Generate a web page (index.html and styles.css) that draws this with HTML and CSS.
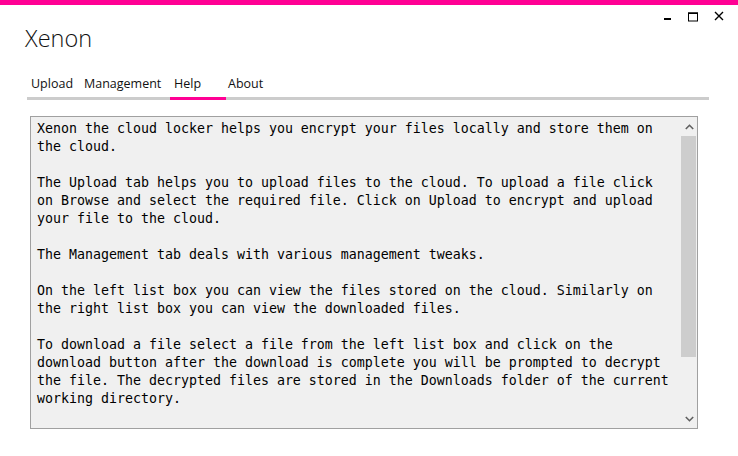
FILE: index.html
```html
<!DOCTYPE html>
<html>
<head>
<meta charset="utf-8">
<link rel="stylesheet" href="styles.css">
</head>
<body>
<div class="topbar"></div>
<div class="header">
  <div class="title">Xenon</div>
  <div class="controls">
    <svg class="ctl ctl-min" width="10" height="10" viewBox="0 0 10 10"><rect x="0" y="7" width="7" height="2" fill="#000"/></svg>
    <svg class="ctl ctl-max" width="11" height="10" viewBox="0 0 11 10"><rect x="0.5" y="1" width="9" height="8" fill="none" stroke="#000" stroke-width="1"/><rect x="0" y="0.5" width="10" height="1.5" fill="#000"/></svg>
    <svg class="ctl ctl-close" width="10" height="10" viewBox="0 0 10 10"><path d="M1 1 L9 9 M9 1 L1 9" stroke="#000" stroke-width="1.4" fill="none"/></svg>
  </div>
</div>
<div class="tabs">
  <div class="tab tab-upload">Upload</div>
  <div class="tab tab-manage">Management</div>
  <div class="tab tab-help active">Help</div>
  <div class="tab tab-about">About</div>
</div>
<div class="box">
  <div class="text">Xenon the cloud locker helps you encrypt your files locally and store them on
the cloud.

The Upload tab helps you to upload files to the cloud. To upload a file click
on Browse and select the required file. Click on Upload to encrypt and upload
your file to the cloud.

The Management tab deals with various management tweaks.

On the left list box you can view the files stored on the cloud. Similarly on
the right list box you can view the downloaded files.

To download a file select a file from the left list box and click on the
download button after the download is complete you will be prompted to decrypt
the file. The decrypted files are stored in the Downloads folder of the current
working directory.</div>
  <div class="scrollbar">
    <div class="arrow">
      <svg width="9" height="6" viewBox="0 0 9 6"><path d="M0.8 5 L4.5 1.3 L8.2 5" stroke="#606060" stroke-width="1.6" fill="none"/></svg>
    </div>
    <div class="track">
      <div class="thumb"></div>
    </div>
    <div class="arrow">
      <svg width="9" height="6" viewBox="0 0 9 6"><path d="M0.8 1 L4.5 4.7 L8.2 1" stroke="#606060" stroke-width="1.6" fill="none"/></svg>
    </div>
  </div>
</div>
</body>
</html>
```
FILE: styles.css
```css
html, body {
  margin: 0;
  padding: 0;
  background: #ffffff;
}
body {
  width: 738px;
  height: 456px;
  overflow: hidden;
  font-family: "Open Sans", "Noto Sans", sans-serif;
  color: #000;
}
.topbar {
  height: 5px;
  background: #ff0094;
}
.header {
  display: flex;
  justify-content: space-between;
  align-items: flex-start;
  padding: 0 14px 0 25px;
  height: 62px;
}
.title {
  font-family: "Open Sans", sans-serif;
  font-weight: 300;
  font-size: 23.5px;
  line-height: 32px;
  margin-top: 17px;
  color: #111;
}
.controls {
  display: flex;
  align-items: flex-start;
  padding-top: 6px;
}
.ctl { display: block; }
.ctl-min { margin-top: 0; margin-right: 14px; }
.ctl-max { margin-top: 1px; margin-right: 15px; }
.ctl-close { margin-top: 0; }
.tabs {
  display: flex;
  margin-left: 27px;
  width: 682px;
  border-bottom: 3px solid #cccccc;
  height: 30px;
}
.tab {
  font-size: 12.5px;
  line-height: 22px;
  padding: 6px 0 0 4px;
  color: #111;
  box-sizing: border-box;
  height: 33px;
  margin-bottom: -3px;
}
.tab-upload { width: 53px; }
.tab-manage { width: 90px; }
.tab-help { width: 56px; }
.tab-about { padding-left: 2px; }
.tab.active { border-bottom: 3px solid #ff0094; }
.box {
  display: flex;
  margin: 16px 0 0 30px;
  width: 668px;
  height: 313px;
  box-sizing: border-box;
  border: 1px solid #a0a0a0;
  background: #f0f0f0;
}
.text {
  flex: 1;
  white-space: pre;
  font-family: "DejaVu Sans Mono", "Liberation Mono", monospace;
  font-size: 13.29px;
  line-height: 18px;
  padding: 3px 0 0 6px;
  color: #000;
  overflow: hidden;
}
.scrollbar {
  width: 16px;
  display: flex;
  flex-direction: column;
  background: #f0f0f0;
}
.arrow {
  height: 19px;
  display: flex;
  align-items: center;
  justify-content: center;
}
.track {
  flex: 1;
  display: flex;
  flex-direction: column;
}
.thumb {
  height: 221px;
  background: #cdcdcd;
  margin: 0 1px 0 0;
}
```
